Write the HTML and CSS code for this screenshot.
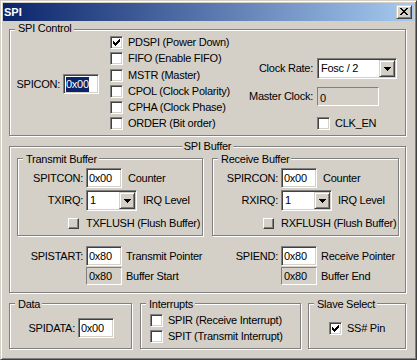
FILE: index.html
```html
<!DOCTYPE html>
<html lang="en">
<head>
  <meta charset="UTF-8">
  <title>SPI</title>
  <link rel="stylesheet" href="styles.css">
</head>
<body>
  <div class="window">
    <div class="titlebar">
      <span class="title">SPI</span>
      <span class="close-btn">
        <svg width="8" height="7" viewBox="0 0 8 7"><path d="M0 0h2v1H0zM6 0h2v1H6zM1 1h2v1H1zM5 1h2v1H5zM2 2h4v1H2zM3 3h2v1H3zM2 4h4v1H2zM1 5h2v1H1zM5 5h2v1H5zM0 6h2v1H0zM6 6h2v1H6z"/></svg>
      </span>
    </div>

    <div class="client">
      <!-- SPI Control -->
      <div class="group spi-control">
        <span class="group-title top-title">SPI Control</span>
        <div class="spicon">
          <span>SPICON:</span>
          <div class="edit"><span class="selected">0x00</span></div>
        </div>
        <div class="check-list">
          <div class="check-row"><span class="checkbox"><svg width="7" height="7" viewBox="0 0 7 7"><path d="M0 2h1v3H0zM1 3h1v3H1zM2 4h1v3H2zM3 3h1v3H3zM4 2h1v3H4zM5 1h1v3H5zM6 0h1v3H6z"/></svg></span>PDSPI (Power Down)</div>
          <div class="check-row"><span class="checkbox"></span>FIFO (Enable FIFO)</div>
          <div class="check-row"><span class="checkbox"></span>MSTR (Master)</div>
          <div class="check-row"><span class="checkbox"></span>CPOL (Clock Polarity)</div>
          <div class="check-row"><span class="checkbox"></span>CPHA (Clock Phase)</div>
          <div class="check-row"><span class="checkbox"></span>ORDER (Bit order)</div>
        </div>
        <div class="clock">
          <div class="clock-row">
            <span class="clock-label">Clock Rate:</span>
            <div class="combo rate">
              <span class="combo-text">Fosc / 2</span>
              <span class="combo-btn"><svg width="7" height="4" viewBox="0 0 7 4"><path d="M0 0h7v1H0zM1 1h5v1H1zM2 2h3v1H2zM3 3h1v1H3z"/></svg></span>
            </div>
          </div>
          <div class="clock-row master">
            <span class="clock-label">Master Clock:</span>
            <div class="static master-field">0</div>
          </div>
          <div class="clock-row clk-en">
            <span class="clock-label"></span>
            <div class="check-row"><span class="checkbox"></span>CLK_EN</div>
          </div>
        </div>
      </div>

      <!-- SPI Buffer -->
      <div class="group spi-buffer">
        <span class="group-title centered">SPI Buffer</span>
        <div class="buffer-cols">
          <div class="buffer-col tx">
            <div class="group sub">
              <span class="group-title">Transmit Buffer</span>
              <div class="form-grid">
                <span class="form-label">SPITCON:</span>
                <div class="form-field"><div class="edit">0x00</div><span>Counter</span></div>
                <span class="form-label">TXIRQ:</span>
                <div class="form-field">
                  <div class="combo irq">
                    <span class="combo-text">1</span>
                    <span class="combo-btn"><svg width="7" height="4" viewBox="0 0 7 4"><path d="M0 0h7v1H0zM1 1h5v1H1zM2 2h3v1H2zM3 3h1v1H3z"/></svg></span>
                  </div>
                  <span>IRQ Level</span>
                </div>
              </div>
              <div class="flush-row"><span class="push-box"></span>TXFLUSH (Flush Buffer)</div>
            </div>
            <div class="form-grid pointers">
              <span class="form-label">SPISTART:</span>
              <div class="form-field"><div class="edit">0x80</div><span>Transmit Pointer</span></div>
              <span></span>
              <div class="form-field"><div class="static">0x80</div><span>Buffer Start</span></div>
            </div>
          </div>

          <div class="buffer-col rx">
            <div class="group sub">
              <span class="group-title">Receive Buffer</span>
              <div class="form-grid">
                <span class="form-label">SPIRCON:</span>
                <div class="form-field"><div class="edit">0x00</div><span>Counter</span></div>
                <span class="form-label">RXIRQ:</span>
                <div class="form-field">
                  <div class="combo irq">
                    <span class="combo-text">1</span>
                    <span class="combo-btn"><svg width="7" height="4" viewBox="0 0 7 4"><path d="M0 0h7v1H0zM1 1h5v1H1zM2 2h3v1H2zM3 3h1v1H3z"/></svg></span>
                  </div>
                  <span>IRQ Level</span>
                </div>
              </div>
              <div class="flush-row"><span class="push-box"></span>RXFLUSH (Flush Buffer)</div>
            </div>
            <div class="form-grid pointers">
              <span class="form-label">SPIEND:</span>
              <div class="form-field"><div class="edit">0x80</div><span>Receive Pointer</span></div>
              <span></span>
              <div class="form-field"><div class="static">0x80</div><span>Buffer End</span></div>
            </div>
          </div>
        </div>
      </div>

      <!-- bottom row -->
      <div class="bottom-row">
        <div class="group data">
          <span class="group-title">Data</span>
          <div class="data-row">
            <span>SPIDATA:</span>
            <div class="edit">0x00</div>
          </div>
        </div>
        <div class="group interrupts">
          <span class="group-title">Interrupts</span>
          <div class="int-list">
            <div class="check-row"><span class="checkbox"></span>SPIR (Receive Interrupt)</div>
            <div class="check-row"><span class="checkbox"></span>SPIT (Transmit Interrupt)</div>
          </div>
        </div>
        <div class="group slave">
          <span class="group-title">Slave Select</span>
          <div class="slave-body">
            <div class="check-row"><span class="checkbox"><svg width="7" height="7" viewBox="0 0 7 7"><path d="M0 2h1v3H0zM1 3h1v3H1zM2 4h1v3H2zM3 3h1v3H3zM4 2h1v3H4zM5 1h1v3H5zM6 0h1v3H6z"/></svg></span>SS# Pin</div>
          </div>
        </div>
      </div>
    </div>
  </div>
</body>
</html>
```

FILE: styles.css
```css
* {
  margin: 0;
  padding: 0;
  box-sizing: border-box;
}
body {
  background: #d4d0c8;
  color: #000;
  font: 11px/13px "Liberation Sans", Arial, sans-serif;
  letter-spacing: -0.25px;
}

/* window frame */
.window {
  width: 417px;
  height: 360px;
  background: #d4d0c8;
  border: 1px solid;
  border-color: #d4d0c8 #404040 #404040 #d4d0c8;
  box-shadow: inset 1px 1px #fff, inset -1px -1px #808080;
  padding: 2px;
}
.titlebar {
  height: 18px;
  display: flex;
  align-items: center;
  justify-content: space-between;
  padding: 0 2px 0 1px;
  background: linear-gradient(to right, #0a246a, #a6caf0);
}
.title {
  color: #fff;
  font-weight: bold;
  line-height: 18px;
  letter-spacing: 0;
}
.close-btn {
  width: 16px;
  height: 14px;
  display: flex;
  justify-content: center;
  padding-top: 2px;
  background: #d4d0c8;
  border: 1px solid;
  border-color: #d4d0c8 #404040 #404040 #d4d0c8;
  box-shadow: inset 1px 1px #fff, inset -1px -1px #808080;
}
.close-btn svg { display: block; }
.client {
  padding: 8px 0 0 6px;
}

/* etched group boxes */
.group {
  position: relative;
  border: 1px solid #808080;
  box-shadow: inset 1px 1px #fff, 1px 1px #fff;
}
.group-title {
  position: absolute;
  top: -6px;
  left: 5px;
  padding: 0 2px 0 3px;
  background: #d4d0c8;
  white-space: nowrap;
}
.group-title.top-title { top: -8px; }
.group-title.centered {
  top: -7px;
  left: 50%;
  transform: translateX(-50%);
  padding: 0 2px;
}

/* controls */
.edit {
  width: 36px;
  height: 20px;
  display: flex;
  align-items: center;
  padding-left: 2px;
  line-height: 18px;
  background: #fff;
  border: 1px solid;
  border-color: #808080 #fff #fff #808080;
  box-shadow: inset 1px 1px #404040, inset -1px -1px #d4d0c8;
}
.selected {
  display: inline-block;
  line-height: 15px;
  background: #0a246a;
  color: #fff;
}
.static {
  width: 36px;
  height: 18px;
  padding-left: 2px;
  line-height: 16px;
  border: 1px solid;
  border-color: #808080 #fff #fff #808080;
}
.combo {
  display: flex;
  height: 21px;
  padding: 1px;
  background: #fff;
  border: 1px solid;
  border-color: #808080 #fff #fff #808080;
  box-shadow: inset 1px 1px #404040, inset -1px -1px #d4d0c8;
}
.combo-text {
  flex: 1;
  padding-left: 2px;
  line-height: 17px;
}
.combo-btn {
  width: 16px;
  height: 17px;
  display: flex;
  align-items: center;
  justify-content: center;
  background: #d4d0c8;
  border: 1px solid;
  border-color: #d4d0c8 #404040 #404040 #d4d0c8;
  box-shadow: inset 1px 1px #fff, inset -1px -1px #808080;
}
.combo-btn svg { display: block; }
.combo.rate { width: 80px; }
.combo.irq { width: 51px; }

.check-row {
  display: flex;
  align-items: center;
  gap: 5px;
  height: 13px;
  white-space: nowrap;
}
.checkbox {
  width: 13px;
  height: 13px;
  flex-shrink: 0;
  display: flex;
  align-items: center;
  justify-content: center;
  background: #fff;
  border: 1px solid;
  border-color: #808080 #fff #fff #808080;
  box-shadow: inset 1px 1px #404040, inset -1px -1px #d4d0c8;
}
.checkbox svg { display: block; }
.push-box {
  width: 11px;
  height: 11px;
  flex-shrink: 0;
  background: #d4d0c8;
  border: 1px solid;
  border-color: #fff #404040 #404040 #fff;
  box-shadow: inset -1px -1px #808080;
}

/* SPI Control */
.spi-control {
  width: 397px;
  height: 107px;
  display: flex;
  align-items: flex-start;
  padding-right: 8px;
}
.spicon {
  width: 100px;
  margin-top: 44px;
  display: flex;
  align-items: center;
  justify-content: flex-end;
  gap: 3px;
  padding-right: 11px;
}
.check-list {
  margin-top: 6px;
  display: flex;
  flex-direction: column;
  gap: 3.25px;
}
.clock {
  margin-left: auto;
  margin-top: 28px;
}
.clock-row {
  display: flex;
  align-items: center;
  gap: 4px;
}
.clock-label {
  width: 66px;
  text-align: right;
  white-space: nowrap;
}
.clock-row.master { margin-top: 8px; }
.clock-row.clk-en { margin-top: 11px; }
.master-field {
  width: 62px;
  height: 19px;
  padding-top: 2px;
}

/* SPI Buffer */
.spi-buffer {
  width: 397px;
  height: 147px;
  margin-top: 10px;
}
.buffer-cols {
  display: flex;
  gap: 9px;
  padding: 11px 0 0 7px;
}
.buffer-col.tx { width: 186px; }
.buffer-col.rx { width: 187px; }
.sub { height: 78px; }
.sub .form-grid { padding-top: 9px; }
.form-grid {
  display: grid;
  grid-template-columns: 65px auto;
  column-gap: 3px;
  row-gap: 2px;
  align-items: center;
}
.form-label {
  text-align: right;
  white-space: nowrap;
}
.form-field {
  display: flex;
  align-items: center;
  gap: 6px;
  white-space: nowrap;
}
.flush-row {
  display: flex;
  align-items: center;
  gap: 7px;
  height: 13px;
  margin-top: 6px;
  padding-left: 50px;
  white-space: nowrap;
}
.pointers {
  margin-top: 10px;
  padding-left: 1px;
  row-gap: 1px;
}
.pointers .form-field { gap: 4px; }

/* bottom row */
.bottom-row {
  display: flex;
  margin-top: 10px;
}
.data { width: 123px; height: 46px; }
.interrupts { width: 161px; height: 46px; margin-left: 8px; }
.slave { width: 98px; height: 46px; margin-left: 7px; }
.data-row {
  display: flex;
  align-items: center;
  justify-content: flex-end;
  gap: 3px;
  padding: 14px 17px 0 0;
}
.int-list {
  display: flex;
  flex-direction: column;
  gap: 3px;
  padding: 10px 0 0 9px;
}
.slave-body {
  padding: 18px 0 0 20px;
}
```
